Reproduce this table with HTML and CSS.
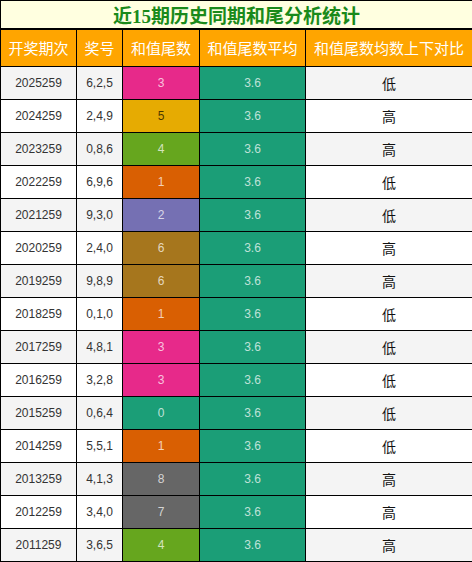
FILE: index.html
```html
<!DOCTYPE html>
<html lang="zh-CN">
<head>
    <meta charset="UTF-8">
    <title>近15期历史同期和尾分析统计</title>
    <link rel="stylesheet" href="styles.css">
</head>
<body>
    <table class="stats">
        <colgroup>
            <col class="c-issue">
            <col class="c-nums">
            <col class="c-tail">
            <col class="c-avg">
            <col class="c-cmp">
        </colgroup>
        <thead>
            <tr>
                <th class="title" colspan="5">近15期历史同期和尾分析统计</th>
            </tr>
            <tr class="head">
                <th>开奖期次</th>
                <th>奖号</th>
                <th>和值尾数</th>
                <th>和值尾数平均</th>
                <th>和值尾数均数上下对比</th>
            </tr>
        </thead>
        <tbody id="rows"></tbody>
    </table>

    <script>
        const history = [
            ['2025259', '6,2,5', 3, '低'],
            ['2024259', '2,4,9', 5, '高'],
            ['2023259', '0,8,6', 4, '高'],
            ['2022259', '6,9,6', 1, '低'],
            ['2021259', '9,3,0', 2, '低'],
            ['2020259', '2,4,0', 6, '高'],
            ['2019259', '9,8,9', 6, '高'],
            ['2018259', '0,1,0', 1, '低'],
            ['2017259', '4,8,1', 3, '低'],
            ['2016259', '3,2,8', 3, '低'],
            ['2015259', '0,6,4', 0, '低'],
            ['2014259', '5,5,1', 1, '低'],
            ['2013259', '4,1,3', 8, '高'],
            ['2012259', '3,4,0', 7, '高'],
            ['2011259', '3,6,5', 4, '高']
        ];

        const tbody = document.getElementById('rows');

        history.forEach(([issue, nums, tail, cmp]) => {
            const tr = document.createElement('tr');
            tr.innerHTML =
                `<td class="issue">${issue}</td>` +
                `<td class="nums">${nums}</td>` +
                `<td class="tail t${tail}">${tail}</td>` +
                `<td class="avg">3.6</td>` +
                `<td class="cmp">${cmp}</td>`;
            tbody.appendChild(tr);
        });
    </script>
</body>
</html>
```

FILE: styles.css
```css
* {
    margin: 0;
    padding: 0;
    box-sizing: border-box;
}

body {
    background: #fff;
    font-family: "Liberation Sans", "Noto Sans CJK SC", sans-serif;
}

.stats {
    width: 472px;
    border-collapse: collapse;
    table-layout: fixed;
    border: 1px solid #000;
}

.c-issue { width: 76px; }
.c-nums { width: 46px; }
.c-tail { width: 77px; }
.c-avg { width: 106px; }
.c-cmp { width: 167px; }

th,
td {
    border: 1px solid #000;
    text-align: center;
    font-weight: normal;
}

.title {
    height: 27px;
    background: #ffffe0;
    border-bottom: 2px solid #000;
    color: #1a8a1a;
    font-family: "Liberation Serif", "Noto Sans CJK SC", serif;
    font-size: 19px;
    font-weight: bold;
}

.head th {
    height: 37px;
    background: #ffa500;
    color: #fff;
    font-size: 15px;
}

td {
    height: 33px;
    font-size: 12px;
    color: #333;
}

.stats tr:nth-child(odd) td {
    background: #f4f4f4;
}

.stats tr:nth-child(even) td {
    background: #fff;
}

.stats .cmp {
    font-size: 14px;
    color: #111;
}

/* coloured tail cells */
.stats tr td.tail,
.stats tr td.avg {
    color: rgba(255, 255, 255, 0.72);
}

.stats tr td.avg { background: #1b9e77; }
.stats tr td.t0 { background: #1b9e77; }
.stats tr td.t1 { background: #d95f02; }
.stats tr td.t2 { background: #7570b3; }
.stats tr td.t3 { background: #e7298a; }
.stats tr td.t4 { background: #66a61e; }
.stats tr td.t5 { background: #e6ab02; color: rgba(0, 0, 0, 0.7); }
.stats tr td.t6 { background: #a6761d; }
.stats tr td.t7,
.stats tr td.t8,
.stats tr td.t9 { background: #666; }
```
